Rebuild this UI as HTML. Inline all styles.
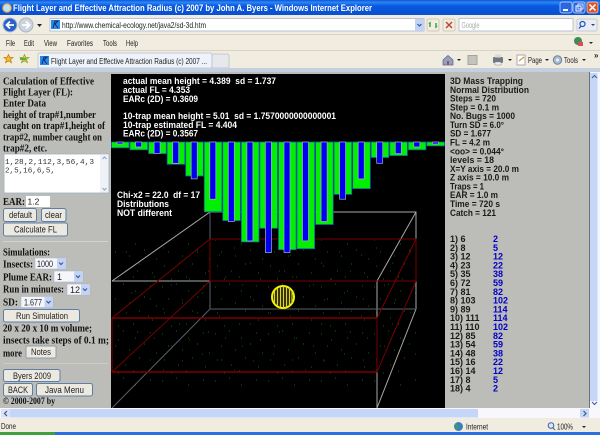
<!DOCTYPE html>
<html><head><meta charset="utf-8"><title>Flight Layer and Effective Attraction Radius</title>
<style>
html,body{margin:0;padding:0;width:600px;height:435px;overflow:hidden;background:#f1ece0}
svg{display:block;position:absolute;left:0;top:0;filter:blur(.3px)}
text{white-space:pre;font-family:"Liberation Sans",sans-serif;font-size:8.5px;fill:#222}
.s{font-family:"Liberation Serif",serif;font-weight:bold;font-size:10.5px;fill:#111}
.w{font-weight:bold;font-size:9px;fill:#fff}
.r{font-weight:bold;font-size:9px;fill:#1a1a1a}
.b{font-weight:bold;font-size:9px;fill:#0000c8}
.c{font-size:9px;fill:#222}
.btn{fill:#ece9e0;stroke:#5d7fa8;stroke-width:1}
.sel{fill:#f4f6fb;stroke:#a8b8d0;stroke-width:.6}
.arr{fill:#c3d3f6}
</style></head><body>
<svg width="600" height="435" viewBox="0 0 600 435" xmlns="http://www.w3.org/2000/svg">
<defs>
<linearGradient id="tb" x1="0" y1="0" x2="0" y2="1"><stop offset="0" stop-color="#0a56d8"/><stop offset=".15" stop-color="#2d86f2"/><stop offset=".4" stop-color="#0758e0"/><stop offset="1" stop-color="#0a4fd0"/></linearGradient>
<pattern id="sp1" width="53" height="47" patternUnits="userSpaceOnUse"><path d="M3 5h1M17 2h1M29 9h1M44 4h1M9 17h1M23 21h1M38 15h1M50 24h1M5 31h1M19 36h1M33 29h1M46 38h1M12 44h1M27 42h1" stroke="#0a6a0a" stroke-width="1"/></pattern>
<pattern id="sp2" width="71" height="61" patternUnits="userSpaceOnUse"><path d="M6 11h1M21 4h1M37 19h1M55 8h1M66 27h1M12 33h1M29 41h1M47 35h1M60 49h1M8 55h1M40 56h1" stroke="#0c5c0c" stroke-width="1"/></pattern>
</defs>

<!-- window title -->
<rect width="600" height="15" fill="url(#tb)"/>
<circle cx="7" cy="8" r="4.2" fill="#bfe0ff" stroke="#e8b030" stroke-width="1.2"/>
<text x="13" y="11" style="font-weight:bold;font-size:9.5px;fill:#fff" textLength="359" lengthAdjust="spacingAndGlyphs">Flight Layer and Effective Attraction Radius (c) 2007 by John A. Byers - Windows Internet Explorer</text>
<rect x="560" y="2" width="12" height="11" rx="2" fill="#2a66e0" stroke="#cfe0ff" stroke-width=".7"/><rect x="563" y="9" width="5" height="2" fill="#fff"/>
<rect x="573" y="2" width="12" height="11" rx="2" fill="#2a66e0" stroke="#cfe0ff" stroke-width=".7"/><rect x="576" y="6" width="5" height="5" fill="none" stroke="#fff"/><rect x="578" y="4" width="5" height="5" fill="none" stroke="#fff" stroke-width=".8"/>
<rect x="587" y="2" width="11" height="11" rx="2" fill="#d8582c" stroke="#f5d8cc" stroke-width=".7"/><path d="M589.5 4.5l6 6M595.5 4.5l-6 6" stroke="#fff" stroke-width="1.5"/>

<!-- address row -->
<rect y="15" width="600" height="20" fill="#f1ece0"/>
<rect y="34" width="600" height="1" fill="#d8d3c4"/>
<circle cx="10" cy="25" r="7" fill="#2a62c8" stroke="#a8bce0"/><path d="M14 25H7M10 21.5L6.5 25l3.5 3.5" fill="none" stroke="#fff" stroke-width="1.8"/>
<circle cx="26" cy="25" r="7" fill="#ccd4e0" stroke="#a8b4c4"/><path d="M22 25h7M26 21.5L29.5 25 26 28.5" fill="none" stroke="#fff" stroke-width="1.8"/>
<path d="M37 24h5l-2.5 3z" fill="#222"/>
<rect x="50" y="18.5" width="374" height="12.5" fill="#fff" stroke="#a8b8d0" stroke-width=".8"/>
<rect x="51" y="20" width="9" height="9" fill="#2a8ae0"/><path d="M53 28l2-7 3 0-3 3 3 4" fill="none" stroke="#0a2a80" stroke-width="1"/>
<text x="62" y="28" style="font-size:8.5px;fill:#222" textLength="144" lengthAdjust="spacingAndGlyphs">http://www.chemical-ecology.net/java2/sd-3d.htm</text>
<rect x="415" y="19" width="9" height="12" class="arr"/><path d="M417.5 24l2 2 2-2" fill="none" stroke="#3a5a90" stroke-width="1.2"/>
<rect x="427" y="19" width="12" height="12" rx="1.5" fill="#f1ece0" stroke="#cfcabb"/><path d="M430 27v-4l-1 1M436 23v4l1-1" stroke="#20a030" stroke-width="1.3" fill="none"/>
<rect x="443" y="19" width="12" height="12" rx="1.5" fill="#f1ece0" stroke="#cfcabb"/><path d="M446 22l6 6M452 22l-6 6" stroke="#c04030" stroke-width="1.4"/>
<rect x="459" y="18.5" width="114" height="12.5" fill="#fff" stroke="#a8b8d0" stroke-width=".8"/>
<text x="461.5" y="28" style="font-size:8.5px;fill:#aaa" textLength="18" lengthAdjust="spacingAndGlyphs">Google</text>
<rect x="577" y="19" width="20" height="12" rx="1.5" fill="#e8ecf4" stroke="#c4ccd8"/><circle cx="582.5" cy="24" r="2.5" fill="none" stroke="#2050c0" stroke-width="1.2"/><path d="M581 26l-2 2.5" stroke="#2050c0" stroke-width="1.3"/><path d="M591 24h4l-2 2z" fill="#345"/>

<!-- menu row -->
<rect y="35" width="600" height="15" fill="#f1ece0"/>
<rect y="50" width="600" height="1" fill="#d8d3c4"/>
<text x="6" y="46" style="font-size:8px" textLength="9" lengthAdjust="spacingAndGlyphs">File</text>
<text x="24" y="46" style="font-size:8px" textLength="10" lengthAdjust="spacingAndGlyphs">Edit</text>
<text x="44" y="46" style="font-size:8px" textLength="13" lengthAdjust="spacingAndGlyphs">View</text>
<text x="67" y="46" style="font-size:8px" textLength="26" lengthAdjust="spacingAndGlyphs">Favorites</text>
<text x="103" y="46" style="font-size:8px" textLength="14" lengthAdjust="spacingAndGlyphs">Tools</text>
<text x="126" y="46" style="font-size:8px" textLength="12" lengthAdjust="spacingAndGlyphs">Help</text>
<circle cx="578" cy="41" r="4" fill="#408a58"/><rect x="578" y="42" width="5" height="4" fill="#d85050"/>
<path d="M589 42h4l-2 2z" fill="#222"/>

<!-- tab row -->
<rect y="51" width="600" height="17" fill="#f1ece0"/>
<path d="M8.5 54.5l1.400 3h3.100l-2.400 2 .9 3.200-3-1.800-3 1.800.9-3.200-2.400-2h3.100z" fill="#f0c020" stroke="#c07818" stroke-width=".7"/>
<path d="M24.5 54.5l1.400 3h3.100l-2.400 2 .9 3.200-3-1.800-3 1.800.9-3.200-2.400-2h3.100z" fill="#d8c840" stroke="#90a030" stroke-width=".7"/><path d="M20 59h6" stroke="#30a040" stroke-width="1.5"/>
<path d="M38 68V55q0-2 2-2h170q2 0 2 2v13z" fill="#eef2fa" stroke="#b4c0d4" stroke-width=".8"/>
<rect x="40" y="56" width="9" height="9" fill="#2a8ae0"/><path d="M42 64l2-7 3 0-3 3 3 4" fill="none" stroke="#0a2a80" stroke-width="1"/>
<text x="51" y="64" style="font-size:8px" textLength="156" lengthAdjust="spacingAndGlyphs">Flight Layer and Effective Attraction Radius (c) 2007 ...</text>
<path d="M212 68V56q0-2 2-2h13q2 0 2 2v12z" fill="#e6e8ec" stroke="#b8c0cc" stroke-width=".8"/>
<path d="M443 60l5-4.500 5 4.500v5h-10z" fill="#8ca4c4" stroke="#506888" stroke-width=".7"/><rect x="447" y="61" width="2" height="4" fill="#d04040"/><path d="M457 59h4l-2 2z" fill="#222"/>
<rect x="468" y="55.5" width="9" height="9" fill="#c4c4bc" stroke="#a4a49c"/>
<rect x="493" y="57" width="10" height="6" rx="1" fill="#707880"/><rect x="495" y="54.5" width="6" height="3" fill="#d8d8d8"/><rect x="495" y="62" width="6" height="3" fill="#f4f4f4" stroke="#888" stroke-width=".5"/><path d="M508 59h4l-2 2z" fill="#222"/>
<rect x="517" y="55" width="8" height="10" fill="#fff" stroke="#9098a8" stroke-width=".8"/><path d="M519 61l5-4" stroke="#d89030" stroke-width="1.2"/>
<text x="528" y="63" style="font-size:8.5px" textLength="14" lengthAdjust="spacingAndGlyphs">Page</text><path d="M545 59h4l-2 2z" fill="#222"/>
<circle cx="557.5" cy="60" r="4.2" fill="#a8bcd0" stroke="#708098"/><circle cx="557.5" cy="60" r="1.5" fill="#eef"/>
<text x="564" y="63" style="font-size:8.5px" textLength="14" lengthAdjust="spacingAndGlyphs">Tools</text><path d="M582 59h4l-2 2z" fill="#222"/>
<text x="594" y="58" style="font-size:8px;font-weight:bold">»</text>

<!-- frame strip -->
<rect y="68" width="600" height="4" fill="#c6cfe0"/>
<rect y="72" width="600" height="2" fill="#bcbcb8"/>

<!-- panels -->
<rect x="0" y="72" width="111" height="336" fill="#bcbcb8"/>
<rect x="445" y="72" width="145" height="336" fill="#bcbcb8"/>
<rect x="111" y="74" width="334" height="334" fill="#000"/>
<rect x="589" y="72" width="1" height="336" fill="#707070"/>

<!-- 3D box: specks -->
<rect x="114" y="240" width="302" height="150" fill="url(#sp1)"/>
<rect x="114" y="243" width="302" height="130" fill="url(#sp2)"/>
<!-- gray wireframe -->
<g fill="none" stroke="#a8a8a8" stroke-width="1">
<path d="M112 281L210 212H416V309M416 212L377 281M377 408L416 309M112 281H377V408"/>
</g>
<g fill="none" stroke="#56626e" stroke-width="1">
<path d="M112 408L210 309H416M210 212V309"/>
</g>
<!-- red wireframe -->
<g fill="none" stroke="#780000" stroke-width="1">
<path d="M210 239H416V281M210 239V281H416M112 318L210 239M112 372L210 281M377 318L416 239M377 372L416 281M112 318V372M377 318V372"/>
</g>
<g fill="none" stroke="#7a0000" stroke-width="1.6">
<path d="M112 318H377M112 372H377"/>
</g>

<!-- chart -->
<g fill="#00f000" stroke="#1060b0" stroke-width=".8">
<rect x="111.5" y="142" width="17.500" height="5.800"/>
<rect x="130" y="142" width="17.600" height="7.800"/>
<rect x="148.6" y="142" width="17.600" height="11.600"/>
<rect x="167.2" y="142" width="17.600" height="22.300"/>
<rect x="185.7" y="142" width="17.600" height="34"/>
<rect x="204.3" y="142" width="17.600" height="69.800"/>
<rect x="222.8" y="142" width="17.600" height="78.600"/>
<rect x="241.4" y="142" width="17.600" height="99.900"/>
<rect x="259.9" y="142" width="17.600" height="86.300"/>
<rect x="278.5" y="142" width="17.600" height="107.700"/>
<rect x="297" y="142" width="17.600" height="106.700"/>
<rect x="315.6" y="142" width="17.600" height="82.500"/>
<rect x="334.1" y="142" width="17.600" height="52.400"/>
<rect x="352.7" y="142" width="17.600" height="46.600"/>
<rect x="371.2" y="142" width="17.600" height="15.500"/>
<rect x="389.8" y="142" width="17.600" height="13.600"/>
<rect x="408.3" y="142" width="17.600" height="7.800"/>
<rect x="426.9" y="142" width="17.600" height="3.900"/>
</g>
<g fill="#0000f0" stroke="#a8aec8" stroke-width=".7">
<rect x="117" y="142" width="6" height="2"/>
<rect x="135.6" y="142" width="6" height="4.900"/>
<rect x="154.1" y="142" width="6" height="11.600"/>
<rect x="172.7" y="142" width="6" height="21.300"/>
<rect x="191.2" y="142" width="6" height="36.900"/>
<rect x="209.8" y="142" width="6" height="57.200"/>
<rect x="228.3" y="142" width="6" height="79.500"/>
<rect x="246.9" y="142" width="6" height="98.900"/>
<rect x="265.4" y="142" width="6" height="110.600"/>
<rect x="284" y="142" width="6" height="110.600"/>
<rect x="302.5" y="142" width="6" height="98.900"/>
<rect x="321.1" y="142" width="6" height="79.500"/>
<rect x="339.6" y="142" width="6" height="57.200"/>
<rect x="358.2" y="142" width="6" height="36.900"/>
<rect x="376.7" y="142" width="6" height="21.300"/>
<rect x="395.3" y="142" width="6" height="11.600"/>
<rect x="413.8" y="142" width="6" height="4.900"/>
<rect x="432.4" y="142" width="6" height="2"/>
</g>

<!-- trap sphere -->
<circle cx="283" cy="297" r="11" fill="#3a3408" stroke="#f4f400" stroke-width="2"/>
<path d="M274.500 291v12M277.500 288v18M280.500 287v20M283.500 286v22M286.500 287v20M289.500 288v18M292 291v12" stroke="#d8d820" stroke-width="1"/>

<!-- canvas text -->
<text class="w" x="123" y="84" textLength="153" lengthAdjust="spacingAndGlyphs">actual mean height = 4.389  sd = 1.737</text>
<text class="w" x="123" y="92.8" textLength="67" lengthAdjust="spacingAndGlyphs">actual FL = 4.353</text>
<text class="w" x="123" y="101.8" textLength="75" lengthAdjust="spacingAndGlyphs">EARc (2D) = 0.3609</text>
<text class="w" x="123" y="118.8" textLength="213" lengthAdjust="spacingAndGlyphs">10-trap mean height = 5.01  sd = 1.7570000000000001</text>
<text class="w" x="123" y="127.8" textLength="114" lengthAdjust="spacingAndGlyphs">10-trap estimated FL = 4.404</text>
<text class="w" x="123" y="136.3" textLength="75" lengthAdjust="spacingAndGlyphs">EARc (2D) = 0.3567</text>
<text class="w" x="117" y="198" textLength="83" lengthAdjust="spacingAndGlyphs">Chi-x2 = 22.0  df = 17</text>
<text class="w" x="117" y="207" textLength="52" lengthAdjust="spacingAndGlyphs">Distributions</text>
<text class="w" x="117" y="216" textLength="55" lengthAdjust="spacingAndGlyphs">NOT different</text>

<!-- left panel -->
<text class="s" x="3" y="84.5" textLength="91" lengthAdjust="spacingAndGlyphs">Calculation of Effective</text>
<text class="s" x="3" y="95.5" textLength="70" lengthAdjust="spacingAndGlyphs">Flight Layer (FL):</text>
<text class="s" x="3" y="106.5" textLength="43" lengthAdjust="spacingAndGlyphs">Enter Data</text>
<text class="s" x="3" y="118" textLength="93" lengthAdjust="spacingAndGlyphs">height of trap#1,number</text>
<text class="s" x="3" y="129" textLength="102" lengthAdjust="spacingAndGlyphs">caught on trap#1,height of</text>
<text class="s" x="3" y="140.5" textLength="99" lengthAdjust="spacingAndGlyphs">trap#2, number caught on</text>
<text class="s" x="3" y="151.5" textLength="44" lengthAdjust="spacingAndGlyphs">trap#2, etc.</text>
<rect x="4" y="154" width="105" height="39" fill="#fff" stroke="#9fb0c8" stroke-width=".8"/>
<rect x="100" y="155" width="8.500" height="37.500" fill="#eef1f6"/>
<path d="M102.5 159l2-2 2 2M102.5 188l2 2 2-2" fill="none" stroke="#90a0c0"/>
<text x="5" y="164" style="font-family:'Liberation Mono',monospace;font-size:7.5px;fill:#333" textLength="89" lengthAdjust="spacingAndGlyphs">1,28,2,112,3,56,4,3</text>
<text x="5" y="172.5" style="font-family:'Liberation Mono',monospace;font-size:7.5px;fill:#333" textLength="50" lengthAdjust="spacingAndGlyphs">2,5,16,6,5,</text>
<text class="s" x="3" y="205" textLength="22" lengthAdjust="spacingAndGlyphs">EAR:</text>
<rect x="26" y="196" width="24" height="11" fill="#fff"/>
<text x="27.5" y="204.5" class="c" style="font-size:8.5px">1.2</text>
<rect class="btn" x="3.5" y="208.5" width="33" height="13" rx="2"/>
<text x="9" y="218" class="c" textLength="23" lengthAdjust="spacingAndGlyphs">default</text>
<rect class="btn" x="41.5" y="208.5" width="24.500" height="13" rx="2"/>
<text x="45" y="218" class="c" textLength="17" lengthAdjust="spacingAndGlyphs">clear</text>
<rect class="btn" x="3.5" y="223" width="64" height="13" rx="2"/>
<text x="14" y="232.5" class="c" textLength="43" lengthAdjust="spacingAndGlyphs">Calculate FL</text>
<rect x="3" y="241" width="105" height="1" fill="#d4d4ce"/>

<text class="s" x="3" y="255.5" textLength="47" lengthAdjust="spacingAndGlyphs">Simulations:</text>
<text class="s" x="3" y="267.5" textLength="30" lengthAdjust="spacingAndGlyphs">Insects:</text>
<rect class="sel" x="35" y="258" width="31" height="11"/><rect class="arr" x="57" y="258.5" width="8.500" height="10"/><path d="M59 262.5l2 2 2-2" fill="none" stroke="#3a5a90" stroke-width="1.2"/>
<text x="37" y="266.8" class="c" textLength="16" lengthAdjust="spacingAndGlyphs">1000</text>
<text class="s" x="3" y="280.5" textLength="49" lengthAdjust="spacingAndGlyphs">Plume EAR:</text>
<rect class="sel" x="54" y="271" width="29" height="11"/><rect class="arr" x="74" y="271.5" width="8.500" height="10"/><path d="M76 275.5l2 2 2-2" fill="none" stroke="#3a5a90" stroke-width="1.2"/>
<text x="57" y="279.8" class="c">1</text>
<text class="s" x="3" y="292.5" textLength="61" lengthAdjust="spacingAndGlyphs">Run in minutes:</text>
<rect class="sel" x="67" y="284" width="23" height="11"/><rect class="arr" x="81" y="284.5" width="8.500" height="10"/><path d="M83 288.5l2 2 2-2" fill="none" stroke="#3a5a90" stroke-width="1.2"/>
<text x="70" y="292.8" class="c">12</text>
<text class="s" x="3" y="305.5" textLength="15" lengthAdjust="spacingAndGlyphs">SD:</text>
<rect class="sel" x="21" y="296.5" width="32" height="11"/><rect class="arr" x="44.5" y="297" width="8.500" height="10"/><path d="M46.5 301l2 2 2-2" fill="none" stroke="#3a5a90" stroke-width="1.2"/>
<text x="24" y="305.3" class="c" textLength="18" lengthAdjust="spacingAndGlyphs">1.677</text>
<rect class="btn" x="3.5" y="309.5" width="76" height="12.500" rx="2"/>
<text x="16" y="318.8" class="c" textLength="52" lengthAdjust="spacingAndGlyphs">Run Simulation</text>
<text class="s" x="3" y="331.5" textLength="89" lengthAdjust="spacingAndGlyphs">20 x 20 x 10 m volume;</text>
<text class="s" x="3" y="343.5" textLength="106" lengthAdjust="spacingAndGlyphs">insects take steps of 0.1 m;</text>
<text class="s" x="3" y="356.5" textLength="19" lengthAdjust="spacingAndGlyphs">more</text>
<rect class="btn" x="26" y="346" width="30" height="12" rx="1" style="stroke:#8a9ab0"/>
<text x="31" y="355" class="c" textLength="20" lengthAdjust="spacingAndGlyphs">Notes</text>
<rect x="3" y="363" width="105" height="1" fill="#d0ccc0"/>
<rect class="btn" x="3.5" y="369.5" width="56.500" height="12" rx="2"/>
<text x="13" y="378.8" class="c" textLength="38" lengthAdjust="spacingAndGlyphs">Byers 2009</text>
<rect class="btn" x="3.5" y="383.5" width="29" height="12.500" rx="2"/>
<text x="8" y="393" class="c" textLength="20" lengthAdjust="spacingAndGlyphs">BACK</text>
<rect class="btn" x="36.5" y="383.5" width="56" height="12.500" rx="2"/>
<text x="45" y="393" class="c" textLength="39" lengthAdjust="spacingAndGlyphs">Java Menu</text>
<text class="s" x="3" y="404" style="font-size:9px" textLength="52" lengthAdjust="spacingAndGlyphs">© 2000-2007 by</text>

<!-- right panel -->
<text class="r" x="450" y="84" textLength="73" lengthAdjust="spacingAndGlyphs">3D Mass Trapping</text>
<text class="r" x="450" y="92.8" textLength="79" lengthAdjust="spacingAndGlyphs">Normal Distribution</text>
<text class="r" x="450" y="101.5" textLength="46" lengthAdjust="spacingAndGlyphs">Steps = 720</text>
<text class="r" x="450" y="110.3" textLength="49" lengthAdjust="spacingAndGlyphs">Step = 0.1 m</text>
<text class="r" x="450" y="119.1" textLength="65" lengthAdjust="spacingAndGlyphs">No. Bugs = 1000</text>
<text class="r" x="450" y="127.9" textLength="54" lengthAdjust="spacingAndGlyphs">Turn SD = 6.0°</text>
<text class="r" x="450" y="136.7" textLength="41" lengthAdjust="spacingAndGlyphs">SD = 1.677</text>
<text class="r" x="450" y="145.5" textLength="40" lengthAdjust="spacingAndGlyphs">FL = 4.2 m</text>
<text class="r" x="450" y="154.3" textLength="54" lengthAdjust="spacingAndGlyphs">&lt;oo&gt; = 0.044°</text>
<text class="r" x="450" y="163" textLength="44" lengthAdjust="spacingAndGlyphs">levels = 18</text>
<text class="r" x="450" y="171.8" textLength="69" lengthAdjust="spacingAndGlyphs">X=Y axis = 20.0 m</text>
<text class="r" x="450" y="180.6" textLength="59" lengthAdjust="spacingAndGlyphs">Z axis = 10.0 m</text>
<text class="r" x="450" y="189.4" textLength="34" lengthAdjust="spacingAndGlyphs">Traps = 1</text>
<text class="r" x="450" y="198.2" textLength="48" lengthAdjust="spacingAndGlyphs">EAR = 1.0 m</text>
<text class="r" x="450" y="207" textLength="50" lengthAdjust="spacingAndGlyphs">Time = 720 s</text>
<text class="r" x="450" y="215.8" textLength="46" lengthAdjust="spacingAndGlyphs">Catch = 121</text>

<text class="r" x="450" y="242">1) 6</text><text class="b" x="493" y="242">2</text>
<text class="r" x="450" y="250.8">2) 8</text><text class="b" x="493" y="250.8">5</text>
<text class="r" x="450" y="259.6">3) 12</text><text class="b" x="493" y="259.6">12</text>
<text class="r" x="450" y="268.4">4) 23</text><text class="b" x="493" y="268.4">22</text>
<text class="r" x="450" y="277.2">5) 35</text><text class="b" x="493" y="277.2">38</text>
<text class="r" x="450" y="286">6) 72</text><text class="b" x="493" y="286">59</text>
<text class="r" x="450" y="294.8">7) 81</text><text class="b" x="493" y="294.8">82</text>
<text class="r" x="450" y="303.6">8) 103</text><text class="b" x="493" y="303.6">102</text>
<text class="r" x="450" y="312.4">9) 89</text><text class="b" x="493" y="312.4">114</text>
<text class="r" x="450" y="321.2">10) 111</text><text class="b" x="493" y="321.2">114</text>
<text class="r" x="450" y="330">11) 110</text><text class="b" x="493" y="330">102</text>
<text class="r" x="450" y="338.8">12) 85</text><text class="b" x="493" y="338.8">82</text>
<text class="r" x="450" y="347.6">13) 54</text><text class="b" x="493" y="347.6">59</text>
<text class="r" x="450" y="356.4">14) 48</text><text class="b" x="493" y="356.4">38</text>
<text class="r" x="450" y="365.2">15) 16</text><text class="b" x="493" y="365.2">22</text>
<text class="r" x="450" y="374">16) 14</text><text class="b" x="493" y="374">12</text>
<text class="r" x="450" y="382.8">17) 8</text><text class="b" x="493" y="382.8">5</text>
<text class="r" x="450" y="391.6">18) 4</text><text class="b" x="493" y="391.6">2</text>

<!-- vertical scrollbar -->
<rect x="590" y="72" width="10" height="336" fill="#f4f6fc"/>
<rect x="590" y="73" width="7.500" height="328" fill="#c6d6f8"/>
<path d="M592 78l2.5-2.5 2.5 2.5M592 402l2.5 2.5 2.5-2.5" fill="none" stroke="#4a6a9a" stroke-width="1.2"/>

<!-- horizontal scrollbar -->
<rect x="0" y="408" width="600" height="10" fill="#f8f8fc"/>
<rect x="1" y="409" width="477" height="8.500" fill="#c6d6f8"/>
<rect x="1" y="409" width="9" height="8.500" fill="#d8e2f8"/>
<path d="M7 411l-2.5 2.5L7 416" fill="none" stroke="#3a5a8a" stroke-width="1.2"/>
<rect x="580" y="409" width="9" height="8.500" fill="#c6d6f8"/>
<path d="M583.5 411l2.5 2.5-2.5 2.5" fill="none" stroke="#3a5a8a" stroke-width="1.2"/>

<!-- status bar -->
<rect y="418" width="600" height="14" fill="#f1ece0"/>
<text x="1" y="429" style="font-size:8.5px" textLength="15" lengthAdjust="spacingAndGlyphs">Done</text>
<circle cx="458.5" cy="426.5" r="4.5" fill="#3a80c0"/><path d="M455 424l3 1 1 3-3 1z" fill="#40a050"/>
<text x="466" y="429.5" style="font-size:8.5px" textLength="22" lengthAdjust="spacingAndGlyphs">Internet</text>
<circle cx="551" cy="425.5" r="2.8" fill="#dce8f8" stroke="#4060a0"/><path d="M553 428l2 2" stroke="#4060a0"/>
<text x="557" y="429.5" style="font-size:8.5px" textLength="16" lengthAdjust="spacingAndGlyphs">100%</text>
<path d="M582 426h4l-2 2z" fill="#222"/>

<!-- taskbar -->
<rect y="432" width="600" height="3" fill="#2a70e0"/>
<rect y="432" width="55" height="3" fill="#40a040"/>
</svg>
</body></html>
